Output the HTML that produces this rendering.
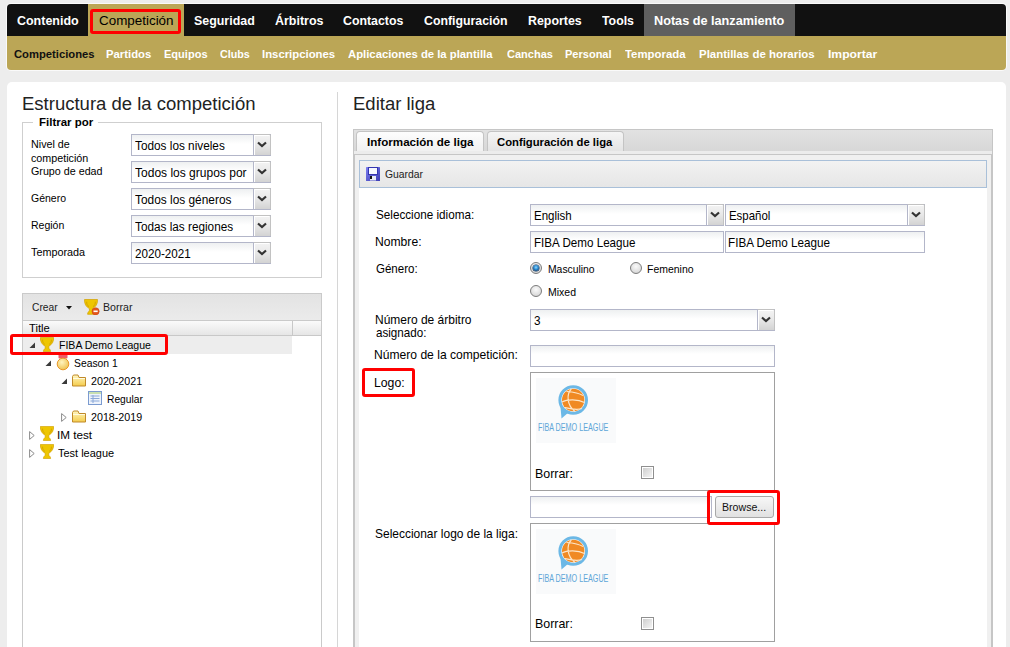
<!DOCTYPE html>
<html><head><meta charset="utf-8">
<style>
*{box-sizing:border-box}
html,body{margin:0;padding:0}
body{width:1010px;height:647px;overflow:hidden;position:relative;background:#ededed;font-family:"Liberation Sans",sans-serif}
.a{position:absolute}
.t{position:absolute;white-space:nowrap;line-height:1;transform-origin:0 0}
.sel{position:absolute;border:1px solid #b3b6c9;background:linear-gradient(#eef0f1,#fff 45%);}
.sel .btn{position:absolute;top:-1px;right:-1px;bottom:0;width:18px;border-left:1px solid #b3b6c9;border-top:1px solid #c2c2c2;border-right:1px solid #c2c2c2;border-top-right-radius:2px;background:linear-gradient(#f3f3f3,#e9e9e9 45%,#d3d3d3);box-shadow:inset 1px 1px 0 #fff}
.sel .btn svg{position:absolute;left:3px;top:6px}
.inp{position:absolute;border:1px solid #b3b6c9;background:linear-gradient(#eef0f1,#fff 40%)}
.red{position:absolute;border:3px solid #ff0000;border-radius:3px}
.radio{position:absolute;width:12px;height:12px;border-radius:50%;border:1px solid #7c7c7c;background:radial-gradient(circle at 50% 35%,#fafafa,#dedede 65%,#c4c4c4)}
.chk{position:absolute;width:13px;height:13px;border:1px solid #8f8f8f;background:#fff}
.chk:after{content:"";position:absolute;left:1px;top:1px;width:9px;height:9px;background:linear-gradient(135deg,#cfcfcf,#f4f4f4)}
</style></head><body>
<!-- top nav -->
<div class="a" style="left:6px;top:3px;width:1001px;height:68px;border-radius:5px;background:#fafafa"></div>
<div class="a" style="left:7px;top:4px;width:999px;height:32px;background:#111;border-radius:4px 4px 0 0"></div>
<div class="a" style="left:88px;top:4px;width:96px;height:32px;background:#bba656"></div>
<div class="a" style="left:644px;top:4px;width:151px;height:32px;background:#5f5f5f"></div>
<div class="a" style="left:7px;top:36px;width:999px;height:34px;background:#bba656;border-radius:0 0 4px 4px"></div>
<div class="red" style="left:90px;top:9px;width:91px;height:25px"></div>

<!-- white panel -->
<div class="a" style="left:7px;top:82px;width:999px;height:600px;background:#fff;border-radius:5px"></div>
<div class="a" style="left:337px;top:92px;width:1px;height:560px;background:#d6d6d6"></div>

<!-- fieldset -->
<div class="a" style="left:22px;top:122px;width:300px;height:156px;border:1px solid #cfcfcf"></div>
<div class="a" style="left:33px;top:120px;width:65px;height:5px;background:#fff"></div>

<div class="sel" style="left:131px;top:134px;width:140px;height:22px"><div class="btn"><svg width="10" height="7" viewBox="0 0 10 7"><path d="M1 1.5 L5 5 L9 1.5" fill="none" stroke="#333" stroke-width="2.2"/></svg></div></div>
<div class="sel" style="left:131px;top:161px;width:140px;height:22px"><div class="btn"><svg width="10" height="7" viewBox="0 0 10 7"><path d="M1 1.5 L5 5 L9 1.5" fill="none" stroke="#333" stroke-width="2.2"/></svg></div></div>
<div class="sel" style="left:131px;top:188px;width:140px;height:22px"><div class="btn"><svg width="10" height="7" viewBox="0 0 10 7"><path d="M1 1.5 L5 5 L9 1.5" fill="none" stroke="#333" stroke-width="2.2"/></svg></div></div>
<div class="sel" style="left:131px;top:215px;width:140px;height:22px"><div class="btn"><svg width="10" height="7" viewBox="0 0 10 7"><path d="M1 1.5 L5 5 L9 1.5" fill="none" stroke="#333" stroke-width="2.2"/></svg></div></div>
<div class="sel" style="left:131px;top:242px;width:140px;height:22px"><div class="btn"><svg width="10" height="7" viewBox="0 0 10 7"><path d="M1 1.5 L5 5 L9 1.5" fill="none" stroke="#333" stroke-width="2.2"/></svg></div></div>

<!-- tree panel -->
<div class="a" style="left:22px;top:293px;width:300px;height:400px;border:1px solid #cacaca;background:#fff"></div>
<div class="a" style="left:23px;top:294px;width:298px;height:26px;background:linear-gradient(#e3e3e3,#ebebeb)"></div>
<div class="a" style="left:23px;top:320px;width:298px;height:1px;background:#cacaca"></div>
<div class="a" style="left:23px;top:321px;width:298px;height:14px;background:linear-gradient(#fbfbfb,#e6e6e6)"></div>
<div class="a" style="left:23px;top:335px;width:298px;height:1px;background:#c8c8c8"></div>
<div class="a" style="left:292px;top:321px;width:1px;height:14px;background:#c8c8c8"></div>
<div class="a" style="left:23px;top:336px;width:269px;height:18px;background:#ededed"></div>
<!-- crear arrow -->
<svg class="a" style="left:66px;top:306px" width="6" height="4" viewBox="0 0 6 4"><path d="M0 0H6L3 3.5Z" fill="#111"/></svg>
<!-- trophy delete icon -->
<svg class="a" style="left:84px;top:299px" width="16" height="16" viewBox="0 0 16 16">
 <path d="M0.5 0.5H13.5C13.8 4.8 11.9 7.8 8.6 9.6V11.8C9.2 12.7 10.4 13.1 10.4 15.3H3.6C3.6 13.1 4.8 12.7 5.4 11.8V9.6C2.1 7.8 0.2 4.8 0.5 0.5Z" fill="#eec600" stroke="#d2a000" stroke-width="0.7"/>
 <path d="M2.7 2.7C2.5 5 3.5 6.7 5 7.7M11.3 2.7C11.5 5 10.5 6.7 9 7.7" stroke="#c89400" stroke-width="0.9" fill="none" opacity="0.75"/>
 <circle cx="11.6" cy="12.3" r="3.6" fill="#e4561c" stroke="#c8400c" stroke-width="0.5"/>
 <rect x="9.5" y="11.5" width="4.2" height="1.6" fill="#fff"/>
</svg>

<!-- tree icons -->
<svg class="a" style="left:29px;top:342px" width="7" height="7" viewBox="0 0 7 7"><path d="M6 0.5V6H0.5Z" fill="#3a3a3a"/></svg>
<svg class="a" style="left:40px;top:337px" width="14" height="15" viewBox="0 0 14 15"><path d="M0.4 0.4H13.6C13.9 4.5 12 7.5 8.8 9.2V11.3C9.4 12.2 10.6 12.6 10.6 14.6H3.4C3.4 12.6 4.6 12.2 5.2 11.3V9.2C2 7.5 0.1 4.5 0.4 0.4Z" fill="#eec600" stroke="#d2a000" stroke-width="0.7"/><path d="M2.6 2.6C2.4 4.8 3.4 6.4 4.8 7.4M11.4 2.6C11.6 4.8 10.6 6.4 9.2 7.4" stroke="#c89400" stroke-width="0.9" fill="none" opacity="0.75"/></svg>

<svg class="a" style="left:45px;top:360px" width="7" height="7" viewBox="0 0 7 7"><path d="M6 0.5V6H0.5Z" fill="#3a3a3a"/></svg>
<svg class="a" style="left:56px;top:354px" width="14" height="17" viewBox="0 0 14 17"><defs><radialGradient id="md" cx="0.4" cy="0.35" r="0.7"><stop offset="0" stop-color="#fff4c0"/><stop offset="1" stop-color="#eec04a"/></radialGradient></defs><rect x="2.5" y="0.5" width="9" height="4" rx="1" fill="#ee5a66"/><circle cx="7" cy="10" r="5.8" fill="url(#md)" stroke="#e8982a" stroke-width="1"/></svg>

<svg class="a" style="left:61px;top:378px" width="7" height="7" viewBox="0 0 7 7"><path d="M6 0.5V6H0.5Z" fill="#3a3a3a"/></svg>
<svg class="a" style="left:72px;top:374px" width="15" height="13" viewBox="0 0 15 13"><defs><linearGradient id="fg" x1="0" y1="0" x2="0" y2="1"><stop offset="0" stop-color="#fff6c0"/><stop offset="1" stop-color="#f4cc4c"/></linearGradient></defs><path d="M0.5 2.5V12H13.5V3.5H7L6 1H1.5Z" fill="url(#fg)" stroke="#c08a2a" stroke-width="1"/><path d="M1 4.5H13" stroke="#fffbe0" stroke-width="1"/></svg>

<svg class="a" style="left:88px;top:391px" width="15" height="14" viewBox="0 0 15 14"><rect x="0.5" y="0.5" width="13" height="13" fill="#eef3fb" stroke="#7b9bd0"/><rect x="1" y="1" width="12" height="2" fill="#c8e0b0"/><path d="M2.5 5H11.5M2.5 7.5H11.5M2.5 10H11.5M5 4V12" stroke="#8aa8d8" stroke-width="1"/></svg>

<svg class="a" style="left:61px;top:413px" width="6" height="9" viewBox="0 0 6 9"><path d="M0.6 0.6V8.4L5.2 4.5Z" fill="#fff" stroke="#8a8a8a" stroke-width="1"/></svg>
<svg class="a" style="left:72px;top:410px" width="15" height="13" viewBox="0 0 15 13"><defs><linearGradient id="fg" x1="0" y1="0" x2="0" y2="1"><stop offset="0" stop-color="#fff6c0"/><stop offset="1" stop-color="#f4cc4c"/></linearGradient></defs><path d="M0.5 2.5V12H13.5V3.5H7L6 1H1.5Z" fill="url(#fg)" stroke="#c08a2a" stroke-width="1"/><path d="M1 4.5H13" stroke="#fffbe0" stroke-width="1"/></svg>

<svg class="a" style="left:29px;top:431px" width="6" height="9" viewBox="0 0 6 9"><path d="M0.6 0.6V8.4L5.2 4.5Z" fill="#fff" stroke="#8a8a8a" stroke-width="1"/></svg>
<svg class="a" style="left:40px;top:426px" width="14" height="15" viewBox="0 0 14 15"><path d="M0.4 0.4H13.6C13.9 4.5 12 7.5 8.8 9.2V11.3C9.4 12.2 10.6 12.6 10.6 14.6H3.4C3.4 12.6 4.6 12.2 5.2 11.3V9.2C2 7.5 0.1 4.5 0.4 0.4Z" fill="#eec600" stroke="#d2a000" stroke-width="0.7"/><path d="M2.6 2.6C2.4 4.8 3.4 6.4 4.8 7.4M11.4 2.6C11.6 4.8 10.6 6.4 9.2 7.4" stroke="#c89400" stroke-width="0.9" fill="none" opacity="0.75"/></svg>

<svg class="a" style="left:29px;top:449px" width="6" height="9" viewBox="0 0 6 9"><path d="M0.6 0.6V8.4L5.2 4.5Z" fill="#fff" stroke="#8a8a8a" stroke-width="1"/></svg>
<svg class="a" style="left:40px;top:444px" width="14" height="15" viewBox="0 0 14 15"><path d="M0.4 0.4H13.6C13.9 4.5 12 7.5 8.8 9.2V11.3C9.4 12.2 10.6 12.6 10.6 14.6H3.4C3.4 12.6 4.6 12.2 5.2 11.3V9.2C2 7.5 0.1 4.5 0.4 0.4Z" fill="#eec600" stroke="#d2a000" stroke-width="0.7"/><path d="M2.6 2.6C2.4 4.8 3.4 6.4 4.8 7.4M11.4 2.6C11.6 4.8 10.6 6.4 9.2 7.4" stroke="#c89400" stroke-width="0.9" fill="none" opacity="0.75"/></svg>

<div class="red" style="left:10px;top:334px;width:158px;height:21px"></div>

<!-- right panel tabs -->
<div class="a" style="left:353px;top:129px;width:640px;height:26px;border:1px solid #c6c6c6;border-bottom:none;background:linear-gradient(#e2e2e2,#d5d5d5)"></div>
<div class="a" style="left:356px;top:131px;width:128px;height:21px;border:1px solid #c4c4c4;border-bottom:none;border-radius:4px 4px 0 0;background:linear-gradient(#fdfdfd,#f0f0f0)"></div>
<div class="a" style="left:487px;top:131px;width:137px;height:21px;border:1px solid #c4c4c4;border-bottom:none;border-radius:4px 4px 0 0;background:linear-gradient(#f5f5f5,#e3e3e3)"></div>
<div class="a" style="left:354px;top:151px;width:638px;height:3px;background:#ececec"></div>
<div class="a" style="left:353px;top:154px;width:640px;height:520px;border:1px solid #c6c6c6;border-width:1px 2px 0 2px;background:#f0f0f0"></div>
<div class="a" style="left:359px;top:160px;width:628px;height:520px;background:#fff"></div>
<div class="a" style="left:359px;top:160px;width:628px;height:28px;border:1px solid #a9c0d9;background:linear-gradient(#f2f2f2,#e6e6e6)"></div>
<!-- save icon -->
<svg class="a" style="left:366px;top:167px" width="14" height="14" viewBox="0 0 14 14">
 <defs><linearGradient id="fd" x1="0" y1="0" x2="1" y2="1"><stop offset="0" stop-color="#7d7ff0"/><stop offset="1" stop-color="#3c3cb4"/></linearGradient></defs>
 <rect x="0" y="0" width="14" height="14" rx="0.5" fill="url(#fd)"/>
 <rect x="2" y="0" width="10" height="8" fill="#3536b0"/>
 <rect x="3" y="1" width="8" height="6" fill="#f6f8ff"/>
 <rect x="4" y="9" width="6" height="4.5" fill="#e8eaf6"/>
 <rect x="4" y="9" width="2" height="3" fill="#111"/>
</svg>

<!-- form controls -->
<div class="sel" style="left:530px;top:204px;width:194px;height:22px"><div class="btn"><svg width="10" height="7" viewBox="0 0 10 7"><path d="M1 1.5 L5 5 L9 1.5" fill="none" stroke="#333" stroke-width="2.2"/></svg></div></div>
<div class="sel" style="left:725px;top:204px;width:200px;height:22px"><div class="btn"><svg width="10" height="7" viewBox="0 0 10 7"><path d="M1 1.5 L5 5 L9 1.5" fill="none" stroke="#333" stroke-width="2.2"/></svg></div></div>
<div class="inp" style="left:530px;top:231px;width:194px;height:22px"></div>
<div class="inp" style="left:725px;top:231px;width:200px;height:22px"></div>

<div class="radio" style="left:530px;top:262px"></div>
<div class="a" style="left:533px;top:265px;width:6px;height:6px;border-radius:50%;background:radial-gradient(circle at 50% 40%,#8fd8ff,#2a8ad0 45%,#0b3a6a 80%);box-shadow:0 0 0 0.5px #0b2e55"></div>
<div class="radio" style="left:630px;top:262px"></div>
<div class="radio" style="left:530px;top:285px"></div>

<div class="sel" style="left:530px;top:309px;width:245px;height:22px"><div class="btn"><svg width="10" height="7" viewBox="0 0 10 7"><path d="M1 1.5 L5 5 L9 1.5" fill="none" stroke="#333" stroke-width="2.2"/></svg></div></div>
<div class="inp" style="left:530px;top:345px;width:245px;height:22px"></div>

<div class="a" style="left:530px;top:372px;width:245px;height:119px;border:1px solid #a0a0a0"></div>
<div class="chk" style="left:641px;top:466px"></div>
<div class="inp" style="left:530px;top:496px;width:182px;height:22px"></div>
<div class="a" style="left:715px;top:496px;width:59px;height:22px;border:1px solid #a8a8a8;border-radius:3px;background:linear-gradient(#f7f7f7,#e1e1e1)"></div>
<div class="a" style="left:530px;top:523px;width:245px;height:119px;border:1px solid #a0a0a0"></div>
<div class="chk" style="left:641px;top:617px"></div>

<!-- logos -->
<svg class="a" style="left:536px;top:378px" width="80" height="65" viewBox="0 0 80 65">
 <rect width="80" height="65" fill="#f9fafb"/>
 <path d="M24.5 29 L25.5 40.5 L33 34 Z" fill="#6cb8e6"/>
 <circle cx="37.2" cy="22" r="13.3" fill="#fff" stroke="#6cb8e6" stroke-width="3"/>
 <circle cx="37.2" cy="22" r="11.2" fill="#f08a24"/>
 <path d="M35.3 11 C30.5 16 30.5 27 39 33.5 M26 24 C31 21 42 21 48.5 24.5 M30.5 13.5 C37 14 43 15 47 17.5 M28.5 29.5 C35 31 41 32.5 46 30.5" stroke="#fde6c8" stroke-width="1.2" fill="none"/>
 <text x="2" y="53" font-family="Liberation Sans" font-size="10.3" fill="#5ea6d8" textLength="70.4" lengthAdjust="spacingAndGlyphs">FIBA DEMO LEAGUE</text>
</svg>
<svg class="a" style="left:536px;top:529px" width="80" height="65" viewBox="0 0 80 65">
 <rect width="80" height="65" fill="#f9fafb"/>
 <path d="M24.5 29 L25.5 40.5 L33 34 Z" fill="#6cb8e6"/>
 <circle cx="37.2" cy="22" r="13.3" fill="#fff" stroke="#6cb8e6" stroke-width="3"/>
 <circle cx="37.2" cy="22" r="11.2" fill="#f08a24"/>
 <path d="M35.3 11 C30.5 16 30.5 27 39 33.5 M26 24 C31 21 42 21 48.5 24.5 M30.5 13.5 C37 14 43 15 47 17.5 M28.5 29.5 C35 31 41 32.5 46 30.5" stroke="#fde6c8" stroke-width="1.2" fill="none"/>
 <text x="2" y="53" font-family="Liberation Sans" font-size="10.3" fill="#5ea6d8" textLength="70.4" lengthAdjust="spacingAndGlyphs">FIBA DEMO LEAGUE</text>
</svg>

<div class="red" style="left:362px;top:368px;width:53px;height:29px"></div>
<div class="red" style="left:707px;top:490px;width:73px;height:35px"></div>

<span class=t style="left:17.00px;top:13.00px;font:bold 13px 'Liberation Sans', sans-serif;color:#fff;transform:scaleX(0.9592);">Contenido</span>
<span class=t style="left:99.00px;top:13.00px;font:normal 13px 'Liberation Sans', sans-serif;color:#000;transform:scaleX(1.0316);">Competición</span>
<span class=t style="left:194.00px;top:13.00px;font:bold 13px 'Liberation Sans', sans-serif;color:#fff;transform:scaleX(0.9556);">Seguridad</span>
<span class=t style="left:274.80px;top:13.00px;font:bold 13px 'Liberation Sans', sans-serif;color:#fff;transform:scaleX(0.9577);">Árbitros</span>
<span class=t style="left:343.40px;top:13.00px;font:bold 13px 'Liberation Sans', sans-serif;color:#fff;transform:scaleX(0.9490);">Contactos</span>
<span class=t style="left:423.50px;top:13.00px;font:bold 13px 'Liberation Sans', sans-serif;color:#fff;transform:scaleX(0.9471);">Configuración</span>
<span class=t style="left:528.00px;top:13.00px;font:bold 13px 'Liberation Sans', sans-serif;color:#fff;transform:scaleX(0.9533);">Reportes</span>
<span class=t style="left:601.80px;top:13.00px;font:bold 13px 'Liberation Sans', sans-serif;color:#fff;transform:scaleX(0.9471);">Tools</span>
<span class=t style="left:654.00px;top:13.00px;font:bold 13px 'Liberation Sans', sans-serif;color:#fff;transform:scaleX(0.9746);">Notas de lanzamiento</span>
<span class=t style="left:13.60px;top:48.00px;font:bold 11px 'Liberation Sans', sans-serif;color:#111;transform:scaleX(1.0212);">Competiciones</span>
<span class=t style="left:106.40px;top:48.00px;font:bold 11px 'Liberation Sans', sans-serif;color:#fff;transform:scaleX(1.0275);">Partidos</span>
<span class=t style="left:164.00px;top:48.00px;font:bold 11px 'Liberation Sans', sans-serif;color:#fff;transform:scaleX(1.0030);">Equipos</span>
<span class=t style="left:219.60px;top:48.00px;font:bold 11px 'Liberation Sans', sans-serif;color:#fff;transform:scaleX(0.9757);">Clubs</span>
<span class=t style="left:262.40px;top:48.00px;font:bold 11px 'Liberation Sans', sans-serif;color:#fff;transform:scaleX(1.0311);">Inscripciones</span>
<span class=t style="left:348.30px;top:48.00px;font:bold 11px 'Liberation Sans', sans-serif;color:#fff;transform:scaleX(1.0277);">Aplicaciones de la plantilla</span>
<span class=t style="left:506.50px;top:48.00px;font:bold 11px 'Liberation Sans', sans-serif;color:#fff;transform:scaleX(1.0014);">Canchas</span>
<span class=t style="left:565.20px;top:48.00px;font:bold 11px 'Liberation Sans', sans-serif;color:#fff;transform:scaleX(1.0020);">Personal</span>
<span class=t style="left:624.90px;top:48.00px;font:bold 11px 'Liberation Sans', sans-serif;color:#fff;transform:scaleX(1.0344);">Temporada</span>
<span class=t style="left:699.40px;top:48.00px;font:bold 11px 'Liberation Sans', sans-serif;color:#fff;transform:scaleX(1.0401);">Plantillas de horarios</span>
<span class=t style="left:827.60px;top:48.00px;font:bold 11px 'Liberation Sans', sans-serif;color:#fff;transform:scaleX(1.1029);">Importar</span>
<span class=t style="left:22.14px;top:94.00px;font:normal 17.5px 'Liberation Sans', sans-serif;color:#222;transform:scaleX(1.0577);">Estructura de la competición</span>
<span class=t style="left:38.50px;top:116.00px;font:bold 11px 'Liberation Sans', sans-serif;color:#000;transform:scaleX(1.0443);">Filtrar por</span>
<span class=t style="left:31.40px;top:138.00px;font:normal 11px 'Liberation Sans', sans-serif;color:#000;transform:scaleX(0.9767);">Nivel de</span>
<span class=t style="left:31.40px;top:152.00px;font:normal 11px 'Liberation Sans', sans-serif;color:#000;transform:scaleX(0.9765);">competición</span>
<span class=t style="left:31.40px;top:165.00px;font:normal 11px 'Liberation Sans', sans-serif;color:#000;transform:scaleX(0.9744);">Grupo de edad</span>
<span class=t style="left:31.00px;top:192.00px;font:normal 11px 'Liberation Sans', sans-serif;color:#000;transform:scaleX(0.9543);">Género</span>
<span class=t style="left:31.00px;top:219.00px;font:normal 11px 'Liberation Sans', sans-serif;color:#000;transform:scaleX(0.9557);">Región</span>
<span class=t style="left:31.00px;top:246.00px;font:normal 11px 'Liberation Sans', sans-serif;color:#000;transform:scaleX(0.9836);">Temporada</span>
<span class=t style="left:135.40px;top:139.00px;font:normal 12.5px 'Liberation Sans', sans-serif;color:#000;transform:scaleX(0.9437);">Todos los niveles</span>
<span class=t style="left:135.40px;top:166.00px;font:normal 12.5px 'Liberation Sans', sans-serif;color:#000;transform:scaleX(0.9614);">Todos los grupos por</span>
<span class=t style="left:135.40px;top:193.00px;font:normal 12.5px 'Liberation Sans', sans-serif;color:#000;transform:scaleX(0.9506);">Todos los géneros</span>
<span class=t style="left:135.40px;top:220.00px;font:normal 12.5px 'Liberation Sans', sans-serif;color:#000;transform:scaleX(0.9415);">Todas las regiones</span>
<span class=t style="left:135.40px;top:247.00px;font:normal 12.5px 'Liberation Sans', sans-serif;color:#000;transform:scaleX(0.9327);">2020-2021</span>
<span class=t style="left:32.10px;top:301.00px;font:normal 11px 'Liberation Sans', sans-serif;color:#222;transform:scaleX(0.9338);">Crear</span>
<span class=t style="left:103.20px;top:301.00px;font:normal 11px 'Liberation Sans', sans-serif;color:#222;transform:scaleX(0.9645);">Borrar</span>
<span class=t style="left:28.90px;top:322.00px;font:normal 11px 'Liberation Sans', sans-serif;color:#000;transform:scaleX(1.0170);">Title</span>
<span class=t style="left:58.60px;top:339.00px;font:normal 11px 'Liberation Sans', sans-serif;color:#000;transform:scaleX(0.9576);">FIBA Demo League</span>
<span class=t style="left:74.20px;top:357.00px;font:normal 11px 'Liberation Sans', sans-serif;color:#000;transform:scaleX(0.9404);">Season 1</span>
<span class=t style="left:90.50px;top:375.00px;font:normal 11px 'Liberation Sans', sans-serif;color:#000;transform:scaleX(0.9717);">2020-2021</span>
<span class=t style="left:106.60px;top:393.00px;font:normal 11px 'Liberation Sans', sans-serif;color:#000;transform:scaleX(0.9316);">Regular</span>
<span class=t style="left:90.50px;top:411.00px;font:normal 11px 'Liberation Sans', sans-serif;color:#000;transform:scaleX(0.9717);">2018-2019</span>
<span class=t style="left:56.94px;top:429.00px;font:normal 11px 'Liberation Sans', sans-serif;color:#000;transform:scaleX(1.0642);">IM test</span>
<span class=t style="left:58.00px;top:447.00px;font:normal 11px 'Liberation Sans', sans-serif;color:#000;transform:scaleX(0.9974);">Test league</span>
<span class=t style="left:352.64px;top:94.00px;font:normal 17.5px 'Liberation Sans', sans-serif;color:#222;transform:scaleX(1.0573);">Editar liga</span>
<span class=t style="left:366.50px;top:136.00px;font:bold 11px 'Liberation Sans', sans-serif;color:#000;transform:scaleX(1.0557);">Información de liga</span>
<span class=t style="left:497.40px;top:136.00px;font:bold 11px 'Liberation Sans', sans-serif;color:#000;transform:scaleX(1.0253);">Configuración de liga</span>
<span class=t style="left:385.40px;top:168.00px;font:normal 11px 'Liberation Sans', sans-serif;color:#222;transform:scaleX(0.9413);">Guardar</span>
<span class=t style="left:375.90px;top:207.00px;font:normal 13px 'Liberation Sans', sans-serif;color:#000;transform:scaleX(0.8995);">Seleccione idioma:</span>
<span class=t style="left:533.52px;top:208.00px;font:normal 13px 'Liberation Sans', sans-serif;color:#000;transform:scaleX(0.8839);">English</span>
<span class=t style="left:728.62px;top:208.00px;font:normal 13px 'Liberation Sans', sans-serif;color:#000;transform:scaleX(0.8787);">Español</span>
<span class=t style="left:374.67px;top:234.00px;font:normal 13px 'Liberation Sans', sans-serif;color:#000;transform:scaleX(0.9329);">Nombre:</span>
<span class=t style="left:533.61px;top:235.00px;font:normal 13px 'Liberation Sans', sans-serif;color:#000;transform:scaleX(0.8942);">FIBA Demo League</span>
<span class=t style="left:728.20px;top:235.00px;font:normal 13px 'Liberation Sans', sans-serif;color:#000;transform:scaleX(0.8987);">FIBA Demo League</span>
<span class=t style="left:375.60px;top:261.00px;font:normal 13px 'Liberation Sans', sans-serif;color:#000;transform:scaleX(0.8865);">Género:</span>
<span class=t style="left:547.60px;top:263.00px;font:normal 11px 'Liberation Sans', sans-serif;color:#000;transform:scaleX(0.9412);">Masculino</span>
<span class=t style="left:647.00px;top:263.00px;font:normal 11px 'Liberation Sans', sans-serif;color:#000;transform:scaleX(0.9509);">Femenino</span>
<span class=t style="left:547.60px;top:286.00px;font:normal 11px 'Liberation Sans', sans-serif;color:#000;transform:scaleX(0.9547);">Mixed</span>
<span class=t style="left:374.68px;top:312.00px;font:normal 13px 'Liberation Sans', sans-serif;color:#000;transform:scaleX(0.9214);">Número de árbitro</span>
<span class=t style="left:375.60px;top:325.00px;font:normal 13px 'Liberation Sans', sans-serif;color:#000;transform:scaleX(0.8948);">asignado:</span>
<span class=t style="left:533.90px;top:313.00px;font:normal 13px 'Liberation Sans', sans-serif;color:#000;transform:scaleX(0.9000);">3</span>
<span class=t style="left:373.67px;top:347.00px;font:normal 13px 'Liberation Sans', sans-serif;color:#000;transform:scaleX(0.9306);">Número de la competición:</span>
<span class=t style="left:374.46px;top:375.00px;font:normal 13px 'Liberation Sans', sans-serif;color:#000;transform:scaleX(0.9411);">Logo:</span>
<span class=t style="left:534.85px;top:466.00px;font:normal 13px 'Liberation Sans', sans-serif;color:#000;transform:scaleX(0.9549);">Borrar:</span>
<span class=t style="left:722.40px;top:501.00px;font:normal 11px 'Liberation Sans', sans-serif;color:#111;transform:scaleX(0.9631);">Browse...</span>
<span class=t style="left:374.60px;top:526.00px;font:normal 13px 'Liberation Sans', sans-serif;color:#000;transform:scaleX(0.9201);">Seleccionar logo de la liga:</span>
<span class=t style="left:534.85px;top:616.00px;font:normal 13px 'Liberation Sans', sans-serif;color:#000;transform:scaleX(0.9549);">Borrar:</span>
</body></html>
